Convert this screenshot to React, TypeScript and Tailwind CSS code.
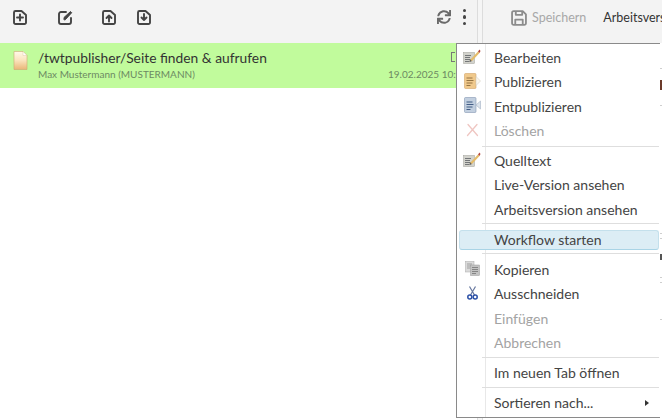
import React from 'react'
import { FaSync } from 'react-icons/fa'

function FileBox({ children }: { children: React.ReactNode }) {
  return (
    <svg width="14" height="15" viewBox="0 0 14 15" fill="none" stroke="#444" strokeWidth="1.9" strokeLinecap="round" strokeLinejoin="round">
      <path d="M2.5 1h6L13 5v7.5a1.5 1.5 0 0 1-1.5 1.5h-9A1.5 1.5 0 0 1 1 12.5v-10A1.5 1.5 0 0 1 2.5 1z" />
      {children}
    </svg>
  )
}

function EditIcon() {
  return (
    <svg width="15" height="15" viewBox="0 0 15 15" fill="none" stroke="#444" strokeWidth="1.9" strokeLinecap="round" strokeLinejoin="round">
      <path d="M8 2H3A2 2 0 0 0 1 4v8a2 2 0 0 0 2 2h8a2 2 0 0 0 2-2V8" />
      <path d="M6 9.5V7.5L12.5 1.5l1.2 1.2L7.5 9.5z" fill="#444" strokeWidth="1" />
    </svg>
  )
}

function SaveIcon() {
  return (
    <svg className="shrink-0" width="16" height="16" viewBox="0 0 15 15" fill="none" stroke="#8c8c8c" strokeWidth="1.7" strokeLinejoin="round">
      <path d="M2.5 1h8.5l3 3v8.5a1.5 1.5 0 0 1-1.5 1.5h-10A1.5 1.5 0 0 1 1 12.5v-10A1.5 1.5 0 0 1 2.5 1z" />
      <path d="M4.5 1.5v3h6v-3M4 14V9h7v5" />
    </svg>
  )
}

function PageIcon() {
  return (
    <svg width="15" height="19" viewBox="0 0 15 19">
      <defs>
        <linearGradient id="pg" x1="0" y1="0" x2="0" y2="1">
          <stop offset="0" stopColor="#fff9ea" />
          <stop offset="0.5" stopColor="#fae3bc" />
          <stop offset="1" stopColor="#eab678" />
        </linearGradient>
      </defs>
      <path d="M1 .5h9L14 4.5v14H1z" fill="url(#pg)" stroke="#cfa873" strokeWidth="0.6" />
      <path d="M10 .5v4h4z" fill="#fff" stroke="#d8c09a" strokeWidth="0.4" />
    </svg>
  )
}

function EditDocIcon() {
  return (
    <svg width="18" height="15" viewBox="0 0 18 15">
      <rect x="0.5" y="3.5" width="11" height="11" fill="#d2d2cc" stroke="#a0a09a" strokeWidth="0.5" />
      <path d="M2 6.5h6M2 8.5h5M2 10.5h6M2 12.5h4" stroke="#5a5e62" strokeWidth="0.8" />
      <path d="M7 11l8-8.5 1.5 1.5L9 12z" fill="#e5bc6a" />
      <path d="M15 2.5l1.5-2 1 1.5-1 2z" fill="#b5483c" />
      <path d="M7 11l-.7 2 2.7-1z" fill="#44403a" />
    </svg>
  )
}

function PublishIcon() {
  return (
    <svg width="17" height="16" viewBox="0 0 17 16">
      <rect x="0.5" y="0.5" width="11.5" height="15" rx="1" fill="#f0c98c" stroke="#d3a468" strokeWidth="0.6" />
      <path d="M2.5 5h6M2.5 7.5h7M2.5 10h6M2.5 12.5h4" stroke="#8a6a3a" strokeWidth="0.9" />
      <path d="M12 3.5l4.5 4.5-4.5 4.5z" fill="#fbf6ec" stroke="#d5d0c2" strokeWidth="0.6" />
    </svg>
  )
}

function UnpublishIcon() {
  return (
    <svg width="17" height="16" viewBox="0 0 17 16">
      <rect x="0.5" y="0.5" width="11.5" height="15" rx="1" fill="#c2cfdf" stroke="#8497b2" strokeWidth="0.6" />
      <path d="M2.5 5h6M2.5 7.5h7M2.5 10h6M2.5 12.5h4" stroke="#34507c" strokeWidth="0.9" />
      <path d="M16.5 4l-4.5 4 4.5 4z" fill="#dde4ec" stroke="#a3b1c4" strokeWidth="0.6" />
    </svg>
  )
}

function DeleteIcon() {
  return (
    <svg width="13" height="14" viewBox="0 0 13 14" fill="none" stroke="#efc6c2" strokeWidth="1.3" strokeLinecap="round">
      <path d="M2 1.5l9.5 11M11 1.5L1.5 12.5" />
    </svg>
  )
}

function CopyIcon() {
  return (
    <svg width="15" height="15" viewBox="0 0 15 15">
      <rect x="0.5" y="0.5" width="8.5" height="10.5" fill="#dadada" stroke="#aaa" strokeWidth="0.5" />
      <path d="M2 3h5M2 5h5M2 7h3" stroke="#888" strokeWidth="0.7" />
      <rect x="5.5" y="4" width="9" height="10.5" fill="#c3c3c3" stroke="#999" strokeWidth="0.5" />
      <path d="M7 6.5h6M7 8.5h6M7 10.5h6M7 12.5h4" stroke="#6a6a6a" strokeWidth="0.7" />
    </svg>
  )
}

function CutIcon() {
  return (
    <svg width="11" height="14" viewBox="0 0 11 14" fill="none">
      <path d="M2.5 0.5l5 8.5M8.5 0.5l-5 8.5" stroke="#66779f" strokeWidth="1.2" />
      <circle cx="2.8" cy="11" r="2" stroke="#2d52a8" strokeWidth="1.5" />
      <circle cx="8.2" cy="11" r="2" stroke="#2d52a8" strokeWidth="1.5" />
    </svg>
  )
}

type Item = { label: string; icon?: React.ReactNode; disabled?: boolean; active?: boolean; sub?: boolean }

const groups: { cls: string; items: Item[] }[] = [
  {
    cls: 'pt-[1.8px] pb-[2.6px]',
    items: [
      { label: 'Bearbeiten', icon: <EditDocIcon /> },
      { label: 'Publizieren', icon: <PublishIcon /> },
      { label: 'Entpublizieren', icon: <UnpublishIcon /> },
      { label: 'Löschen', icon: <DeleteIcon />, disabled: true },
    ],
  },
  {
    cls: 'pt-[1.8px] pb-[1px]',
    items: [
      { label: 'Quelltext', icon: <EditDocIcon /> },
      { label: 'Live-Version ansehen' },
      { label: 'Arbeitsversion ansehen' },
    ],
  },
  { cls: 'pt-[6px] pb-[3px]', items: [{ label: 'Workflow starten', active: true }] },
  {
    cls: 'pt-[3.8px] pb-[2px]',
    items: [
      { label: 'Kopieren', icon: <CopyIcon /> },
      { label: 'Ausschneiden', icon: <CutIcon /> },
      { label: 'Einfügen', disabled: true },
      { label: 'Abbrechen', disabled: true },
    ],
  },
  { cls: 'pt-[2.3px] pb-[2.3px]', items: [{ label: 'Im neuen Tab öffnen' }] },
  { cls: 'pt-[2.3px] pb-[2.3px]', items: [{ label: 'Sortieren nach...', sub: true }] },
]

function MenuRow({ item }: { item: Item }) {
  if (item.active) {
    return (
      <div className="ml-[2px] flex h-[20px] items-center rounded-[3px] border border-[#c4e0ec] border-b-[#a9d4e6] bg-[#dcedf5]">
        <div className="w-[34px]" />
        <span className="text-[#444]">{item.label}</span>
      </div>
    )
  }
  return (
    <div className="flex h-[24.4px] items-center">
      <div className="flex w-[37px] shrink-0 items-center justify-center pb-[3px] pr-[7px]">{item.icon}</div>
      <span className={item.disabled ? 'text-[#a3a3a3]' : 'text-[#444]'}>{item.label}</span>
      {item.sub && <div className="ml-auto mr-[10px] h-0 w-0 border-y-[3px] border-l-[4px] border-y-transparent border-l-[#333]" />}
    </div>
  )
}

export default function App() {
  return (
    <div className="relative flex h-[420px] w-[662px] overflow-hidden bg-white font-['Lato',sans-serif]">
      {/* left pane */}
      <div className="w-[477px] shrink-0">
        <div className="flex h-[43px] items-center bg-[#f3f3f3] pb-[9px] pl-[13px] pr-[11px]">
          <div className="flex w-[45px]">
            <FileBox><path d="M7 4.5v6M4 7.5h6" /></FileBox>
          </div>
          <div className="flex w-[44px]"><EditIcon /></div>
          <div className="flex w-[35px]">
            <FileBox><path d="M7 11.5V5.5M4.5 8L7 5.5 9.5 8" /></FileBox>
          </div>
          <FileBox><path d="M7 4v6M4.5 7.5L7 10l2.5-2.5" /></FileBox>
          <div className="ml-auto flex items-center gap-[12px]">
            <FaSync className="size-[14px] text-[#6a6a6a]" />
            <div className="flex flex-col gap-[3px]">
              <div className="size-[3.5px] rounded-full bg-[#444]" />
              <div className="size-[3.5px] rounded-full bg-[#444]" />
              <div className="size-[3.5px] rounded-full bg-[#444]" />
            </div>
          </div>
        </div>
        <div className="flex h-[44.5px] items-start bg-[#c1fb9c] pl-[13px] pt-[6px]">
          <div className="mr-[10px] mt-[2px]"><PageIcon /></div>
          <div className="min-w-0 flex-1">
            <div className="flex items-start justify-between pr-[1px]">
              <span className="text-[13.8px] leading-[17px] text-[#333]">/twtpublisher/Seite finden &amp; aufrufen</span>
              <div className="mr-[21px] mt-[3px] h-[10px] w-[4px] border-y border-l border-[#777]" />
            </div>
            <div className="flex justify-between whitespace-nowrap pt-[2px] text-[10px] leading-[12px] text-[#6d8a63]">
              <span>Max Mustermann (MUSTERMANN)</span>
              <span className="w-[89px]">19.02.2025 10:22</span>
            </div>
          </div>
        </div>
      </div>

      {/* splitter */}
      <div className="w-[6px] shrink-0 border-x border-[#dcdcdc] bg-[#f5f5f5]" />

      {/* right pane */}
      <div className="min-w-0 flex-1">
        <div className="flex h-[43px] items-center whitespace-nowrap bg-[#f3f3f3] pb-[7px] pl-[28px] text-[12.5px]">
          <SaveIcon />
          <span className="ml-[5px] text-[#a8a8a8]">Speichern</span>
          <span className="ml-[17px] text-[#333]">Arbeitsversion</span>
        </div>
      </div>

      {/* bits of the page behind the menu, visible past its right edge */}
      <div className="absolute left-[660px] top-[68px] h-px w-[2px] bg-[#cfcfcf]" />
      <div className="absolute left-[660px] top-[80px] h-[10px] w-[2px] bg-[#6b3a2a]" />
      <div className="absolute left-[660px] top-[105px] h-px w-[2px] bg-[#cfcfcf]" />
      <div className="absolute left-[660px] top-[233px] h-px w-[2px] bg-[#cfcfcf]" />
      <div className="absolute left-[660px] top-[238px] h-px w-[2px] bg-[#cfcfcf]" />
      <div className="absolute left-[660px] top-[254px] h-[6px] w-[2px] bg-[#555]" />
      <div className="absolute left-[660px] top-[277px] h-px w-[2px] bg-[#cfcfcf]" />
      <div className="absolute left-[660px] top-[282px] h-px w-[2px] bg-[#cfcfcf]" />
      <div className="absolute left-[660px] top-[319px] h-px w-[2px] bg-[#cfcfcf]" />

      {/* context menu */}
      <div className="absolute left-[456px] top-[43px] w-[204px] border-y border-l border-[#8a8a8a] bg-white text-[14px] leading-[16px]">
        <div className="absolute bottom-0 left-[28px] top-0 w-px bg-[#e8e8e8]" />
        <div className="relative">
          {groups.map((group, i) => (
            <React.Fragment key={i}>
              {i > 0 && <div className="ml-[25px] mr-[1px] h-px bg-[#dedede]" />}
              <div className={`pr-[1px] ${group.cls}`}>
                {group.items.map((item) => (
                  <MenuRow key={item.label} item={item} />
                ))}
              </div>
            </React.Fragment>
          ))}
        </div>
      </div>
    </div>
  )
}
